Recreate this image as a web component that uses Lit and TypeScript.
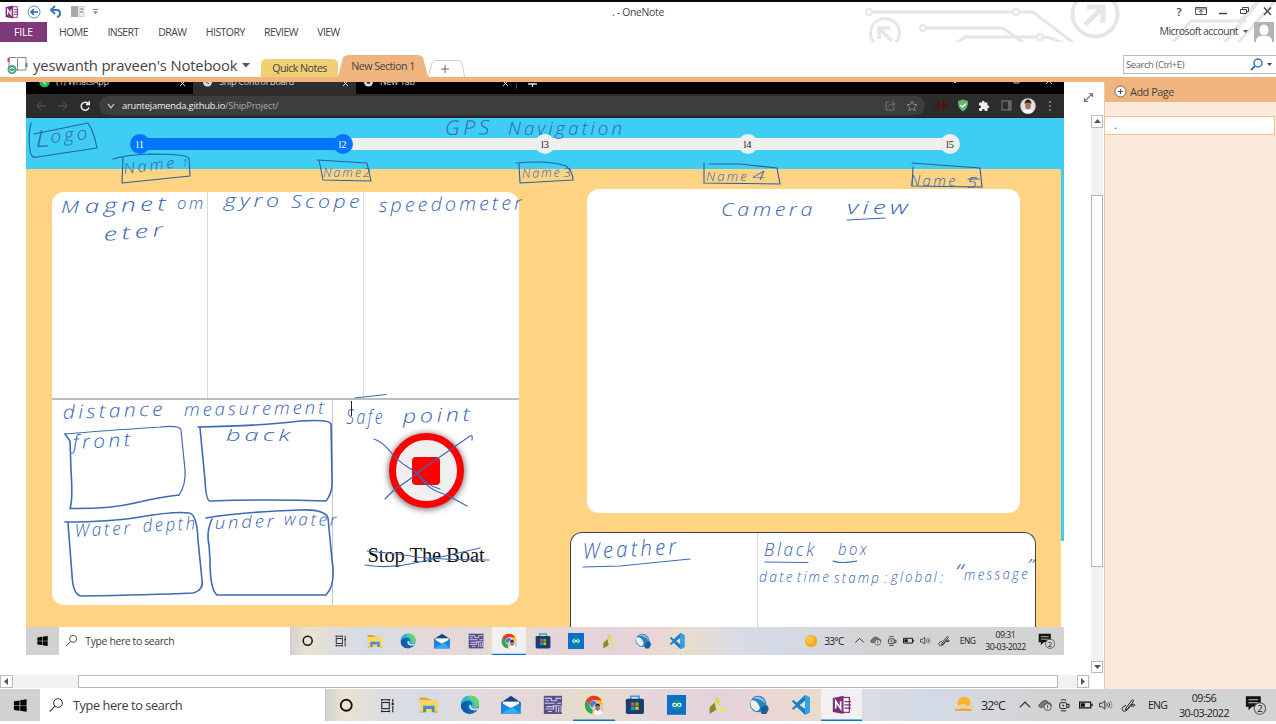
import { LitElement, html, svg, css, SVGTemplateResult } from "lit";
import { customElement, property } from "lit/decorators.js";

const icon = (body: SVGTemplateResult, box = "0 0 24 24") =>
  html`<svg class="ic" viewBox=${box}>${body}</svg>`;

const I: Record<string, SVGTemplateResult> = {
  win: svg`<path fill="#000" d="M3 6l8-1.2v6.8H3zM12 4.6L21 3.3v8.3h-9zM3 12.5h8v6.8L3 18.2zM12 12.5h9v8.3l-9-1.3z"/>`,
  mag: svg`<circle cx="15" cy="9" r="6.5" fill="none" stroke="#333" stroke-width="1.5"/><path d="M10.4 13.8L2.5 21.8" stroke="#333" stroke-width="1.7"/>`,
  ring: svg`<circle cx="12" cy="12" r="8" fill="none" stroke="#111" stroke-width="2.6"/>`,
  task: svg`<g fill="none" stroke="#222" stroke-width="1.6"><rect x="4" y="8" width="11" height="9"/><path d="M3 4h13M4 3v3M15 3v3M3 21h13M4 22v-3M15 22v-3M20 3v5M20 13v9"/></g><rect x="18.4" y="8.5" width="3.2" height="3.4" fill="#222"/>`,
  folder: svg`<path fill="#e0a526" d="M1 3h8l2 2h3v4H1z"/><path fill="#fdd565" d="M1 6h22v15H1z"/><path fill="#3f92d2" d="M5 13h14v8h-3.5v-4h-7v4H5z"/><path fill="#e9ad2d" d="M1 20h4v1.5H1zM19 20h4v1.5h-4z"/>`,
  edge: svg`<circle cx="12" cy="12" r="11" fill="#0c68b8"/><path fill="#2fb7cf" d="M1 12C1 5 6 1 12 1s11 4 11 9c0 4-3 6-6 6-2 0-4-1-3-2 2-3 0-7-4-7-5 0-9 3-9 5z"/><path fill="#60d66c" d="M13 1c6 0 10 4 10 9 0 4-3 6-6 6 2-6-1-11-9-12z"/><path fill="#0b5cab" d="M10 8c-5 3-4 11 3 14-6 2-11-3-12-8 1-4 5-6 9-6z"/><path fill="#e5e0e3" d="M14 14c-1 1 1 2.5 4 2.5 2 0 3-.6 4-1.2L21 18c-4 2-10 0-10-4 0-1 1-2 2-2.400z"/>`,
  mail: svg`<path fill="#0b4a8c" d="M0 9L12 1l12 8v5H0z"/><path fill="#fff" d="M2 8h20v7H2z"/><path fill="#1b86dd" d="M0 9l12 7 12-7v14H0z"/><path fill="#35a9f2" d="M0 23L14 14l10 9z"/>`,
  media: svg`<rect x="1" y="1" width="22" height="22" fill="#5a4f8c"/><path fill="none" stroke="#cfc9e6" stroke-width="1.4" d="M2 4h8v3h6V4h6M2 10h12M17 10h5M4 14h9v3H3M16 13v8M19 15v6M22 13v8M6 20h5M3 7h4M12 13h9"/>`,
  chrome: svg`<circle cx="12" cy="12" r="11" fill="#fbc116"/><path fill="#e33b2e" d="M2.500 6.500A11 11 0 0 1 21.500 6.500H12L7.500 14z"/><path fill="#2da94f" d="M2.500 6.500L8 15l4 2-3 6C2 21-1 13 2.500 6.500z"/><circle cx="12" cy="12" r="5.200" fill="#fff"/><circle cx="11.500" cy="11.500" r="4.200" fill="#3f7fe8"/><circle cx="17" cy="17" r="7" fill="#d5cfcb"/><path fill="#fff" d="M12 22c1-4 3-4 5-4s4 1 5 4c-3 2.500-7 2.500-10 0z"/><ellipse cx="16.500" cy="15.500" rx="2.700" ry="3.600" fill="#a87158"/><path fill="#2a2222" d="M13.500 14c0-5 6-5 6 0-2-1.500-4-1.500-6 0z"/>`,
  store: svg`<path fill="none" stroke="#2ea4e0" stroke-width="2" d="M7 6V1.500h10V6"/><rect x="1" y="4.500" width="22" height="18.500" rx="2" fill="#173f70"/><path fill="#f25022" d="M7.500 9h4v4h-4z"/><path fill="#7fba00" d="M12.500 9h4v4h-4z"/><path fill="#00a4ef" d="M7.500 14h4v4h-4z"/><path fill="#ffb900" d="M12.500 14h4v4h-4z"/>`,
  arduino: svg`<rect width="24" height="24" fill="#0a70cc"/><circle cx="12" cy="12" r="6.500" fill="#0f8f98"/><path fill="none" stroke="#fff" stroke-width="1.300" d="M12 12c-1.500-2.500-5-2.500-5 0s3.500 2.500 5 0 5-2.500 5 0-3.500 2.500-5 0z"/>`,
  leaf: svg`<path fill="#8e8a1e" d="M8 9l2 9-8 5V15z"/><path fill="#d3db5a" d="M8 2l6 2v10L9 9z"/><path fill="#e2e67a" d="M13 13l10 6-7 2-5-4z"/>`,
  globe: svg`<circle cx="11" cy="11" r="10" fill="#2d83bb"/><path fill="#e9f2f8" d="M2 7c5-2 9 2 11 8 0 3-2 5-5 4C3 17 1 12 2 7z"/><path fill="#93c6e4" d="M5 4c7 0 12 3 15 7-1-6-8-12-15-7z"/><path fill="#17629b" d="M14 15l8-3 2 5-3 6h-6z"/>`,
  code: svg`<path fill="#1b7fc8" d="M17 0l6 3v18l-6 3-10-9.500L3 18l-2-1.500L5.500 12 1 7.500 3 6l4 3.500zM17 7l-6.500 5 6.500 5z"/><path fill="#2ea5ea" d="M17 0l6 3v18l-6 3z"/>`,
  note: svg`<rect x="11" y="3" width="10" height="18" fill="#fff" stroke="#7b3179" stroke-width="1.500"/><path d="M15 8h8M15 12h8M15 16h8" stroke="#7b3179" stroke-width="1.600"/><path fill="#7b3179" d="M1 3.500L14 1v22L1 20.500z"/><path fill="none" stroke="#fff" stroke-width="2" d="M4.500 16.500v-9l6 9v-9"/>`,
  sun: svg`<circle cx="12" cy="12" r="9" fill="#f8ab21"/><circle cx="10" cy="10" r="6" fill="#fcc246"/>`,
  haze: svg`<circle cx="11" cy="10" r="8" fill="#f9b52c"/><path d="M4 13c3-3 8-3 10 0h8c2 0 2 3 0 3H2c-2 0-1-3 2-3z" fill="#e6d2a4"/><path d="M1 18h18" stroke="#eba348" stroke-width="2.500" stroke-linecap="round"/>`,
  up: svg`<path fill="none" stroke="#222" stroke-width="1.900" d="M3 16l9-9 9 9"/>`,
  cloud: svg`<path fill="#777" stroke="#333" stroke-width="1.300" d="M6 17c-6-1-5-7-1-8 2-6 11-6 13-1 4 0 6 4 4 7"/><circle cx="16.500" cy="15.500" r="6" fill="#ddd" stroke="#444" stroke-width="1.400"/><path d="M16.500 12v5M16.500 18v1.500" stroke="#333" stroke-width="1.500"/>`,
  cam: svg`<g fill="none" stroke="#222" stroke-width="1.700"><rect x="3" y="8" width="12" height="10" rx="2"/><path d="M15 11h4v5h-4M5 4c3-1.500 6-1.500 9 0M5 22h9"/><circle cx="9" cy="13" r="1"/></g>`,
  batt: svg`<path fill="none" stroke="#111" stroke-width="2" d="M1 7h19v10H1zM22.500 10v4"/><path fill="#111" d="M3 9h7v6H3z"/>`,
  vol: svg`<path fill="none" stroke="#222" stroke-width="1.500" d="M1 9h4l5-4v14l-5-4H1zM13 9c1.500 2 1.500 4 0 6M16 7c3 3 3 7 0 10"/><path fill="none" stroke="#888" stroke-width="1.500" d="M19 5c4 4 4 10 0 14"/>`,
  pen: svg`<path fill="none" stroke="#222" stroke-width="1.600" d="M8 16L17 4c1-2 4-1 3 1l-9 13-4 1zM8 12c-5 1-7 4-6 7s7 3 9-2 5-6 9-7c3 0 3 3 0 3h-4"/>`,
  notif: svg`<path fill="#111" d="M1 2h17v12H8l-4 4v-4H1z"/><path stroke="#ccc" stroke-width="1.200" d="M4 6h11M4 9.500h11"/><circle cx="17" cy="16" r="6.500" fill="#d3d3d3" stroke="#555" stroke-width="1.200"/>`,
};

@customElement("task-bar")
class TaskBar extends LitElement {
  @property() time = "";
  @property() temp = "";
  @property() weather = "sun";
  @property() active = "";
  @property() underline = "";
  @property({ type: Boolean }) note = false;

  static styles = css`
    :host { display: flex; overflow: hidden; color: #222; font-family: "Open Sans", "Noto Sans", sans-serif;
      background: linear-gradient(90deg, #d2d2d2 0 25.5%, #ebe3d0 27%, #dcdde0 30%, #d5dce8 33%, #dfdade 36%, #e8d7d8 39.500%, #e3d9d5 43%, #e8dccb 46%, #e6d7d8 50%, #e4d3dc 56%, #ebd5d6 60%, #e7dcce 64%, #d9dce3 68%, #d3dae6 73%, #d5d7dc 78%, #d3d3d3 81%); }
    .cell { display: flex; align-items: center; justify-content: center; flex: none; box-sizing: border-box; }
    .ic { width: 2em; height: 2em; display: block; }
    .start { width: 4em; background: #d1d1d1; }
    .start .ic { width: 1.850em; height: 1.700em; }
    .search { width: 28.550em; background: #fff; justify-content: flex-start; padding-left: .8em; gap: .9em; border-right: 1px solid #ccc; }
    .search .ic { width: 1.600em; height: 1.600em; }
    .q { font-size: 1.280em; color: #3c3c3c; letter-spacing: -.035em; white-space: nowrap; }
    .app { width: 4.130em; }
    .app .ic { width: 1.980em; height: 1.980em; }
    .thin .ic { width: 1.650em; height: 1.650em; }
    .on { background: #f3f0f2; }
    .line { box-shadow: inset 0 -.15em #0b74cf; }
    .sp { flex: 1; }
    .t { width: 2.030em; } .t .ic { width: 1.400em; height: 1.400em; }
    .sun { width: 2.800em; } .temp { width: 3.600em; justify-content: flex-start; padding-left: .25em; }
    .temp span { font-size: 1.250em; letter-spacing: -.07em; }
    .pen { width: 2.500em; } .pen .ic { width: 1.500em; height: 1.500em; }
    .eng { width: 3.300em; } .eng span { font-size: 1.050em; letter-spacing: -.07em; }
    .clock { width: 6em; flex-direction: column; line-height: 1.500em; gap: 0; }
    .clock span { font-size: 1.080em; letter-spacing: -.06em; white-space: nowrap; }
    .notif { width: 4.200em; }
    .notif .ic { width: 2.100em; height: 2.200em; }
  `;
  render() {
    const apps = ["ring", "task", "folder", "edge", "mail", "media", "chrome", "store", "arduino", "leaf", "globe", "code"];
    if (this.note) apps.push("note");
    return html`
      <div class="cell start">${icon(I.win)}</div>
      <div class="cell search">${icon(I.mag)}<span class="q">Type here to search</span></div>
      ${apps.map((a) => html`<div class="cell app ${a === "ring" || a === "task" ? "thin" : ""} ${this.active === a ? "on line" : ""} ${this.underline === a ? "line" : ""}">${icon(I[a])}</div>`)}
      <div class="sp"></div>
      <div class="cell sun">${icon(I[this.weather])}</div>
      <div class="cell temp"><span>${this.temp}</span></div>
      ${["up", "cloud", "cam", "batt", "vol"].map((a) => html`<div class="cell t">${icon(I[a])}</div>`)}
      <div class="cell pen">${icon(I.pen)}</div>
      <div class="cell eng"><span>ENG</span></div>
      <div class="cell clock"><span>${this.time}</span><span>30-03-2022</span></div>
      <div class="cell notif"><svg class="ic" viewBox="0 0 24 24">${I.notif}<text x="17" y="20" font-size="11" text-anchor="middle" fill="#111">2</text></svg></div>
    `;
  }
}

/* Pen notes: [text, x, baseline, width, size, rotation] */
type Note = [string, number, number, number, number, number?];
const NOTES: Note[] = [
  ["L", 36, 147, 14, 23, -3], ["ogo", 51, 143, 38, 18, -6],
  ["Name", 124, 174, 52, 15, -7], ["1", 182, 167, 6, 11],
  ["Name", 323, 177, 38, 13], ["2", 363, 177, 7, 13], ["Name", 522, 178, 38, 13, -2], ["3", 563, 177, 8, 13],
  ["Name", 706, 181, 41, 13], ["4", 752, 180, 13, 13],
  ["Name", 910, 186, 46, 15], ["5", 967, 188, 10, 14],
  ["GPS", 445, 135, 46, 20, -1], ["Navigation", 508, 135, 115, 19],
  ["M", 61, 213, 18, 17], ["agnet", 85, 213, 83, 19, -2], ["om", 177, 209, 27, 17], ["eter", 104, 241, 62, 18, -5],
  ["gyro", 224, 207, 57, 19], ["Scope", 291, 208, 70, 19], ["speedometer", 379, 212, 144, 19, -1],
  ["Camera", 721, 216, 93, 18], ["view", 847, 214, 63, 18],
  ["distance", 63, 419, 101, 19, -2], ["measurement", 184, 416, 141, 18, -1],
  ["front", 73, 449, 59, 19, -3], ["back", 226, 441, 66, 17],
  ["Water", 75, 537, 56, 18, -3], ["depth", 143, 532, 53, 18, -3],
  ["under", 215, 529, 60, 17, -2], ["water", 284, 525, 53, 17, 1],
  ["Safe", 346, 424, 37, 20, 0], ["point", 403, 423, 69, 19, -2],
  ["Weather", 583, 559, 95, 22, -3],
  ["Black", 764, 556, 51, 18], ["box", 838, 555, 29, 17],
  ["date", 759, 582, 34, 14], ["time", 797, 582, 32, 14], ["stamp", 834, 583, 45, 15],
  [":", 884, 583, 3, 14], ["global", 891, 582, 46, 15], [":", 940, 583, 3, 14],
  ["“", 955, 579, 8, 20], ["message", 964, 580, 64, 15, -1], ["”", 1027, 571, 7, 16],
];

@customElement("ink-layer")
class InkLayer extends LitElement {
  static styles = css`
    :host { display: block; }
    svg { display: block; width: 100%; height: 100%; }
    .pen { fill: none; stroke: #3d6ab5; stroke-width: 1.200; stroke-linecap: round; stroke-linejoin: round; }
    .bold { stroke-width: 1.600; }
    .dark { stroke: #27619d; stroke-width: 1.100; }
    text { font-family: "Open Sans", "Noto Sans", sans-serif; font-weight: 300; font-style: italic; letter-spacing: .16em; fill: #3563b4; }
    .one { letter-spacing: 0; }
  `;
  render() {
    return html`<svg viewBox="0 82 1090 607">
      <g class="pen dark">
        <path d="M31 123Q28 135 30 150Q31 159 37 157L97 148Q94 132 88 123L34 134"/>
        <path d="M113 159Q125 155 150 154Q186 154 189 158L190 176L122 183L123 157"/>
        <path d="M317 160L367 163L371 181L323 180L319 160"/>
        <path d="M516 163Q550 160 566 166Q573 172 573 180L520 183L519 164"/>
        <path d="M704 163V183L780 184L777 168L740 164H709"/>
        <path d="M912 163L980 168L982 187L912 186L913 167M979 179H968"/>
      </g>
      <g class="pen">
        <path d="M847 220L885 218M355 398L386 394.500"/>
        <path d="M583 567L620 566L690 559M765 562L808 562.500M833 561Q840 564 857 561"/>
        <path d="M374 439Q382 442 389 450C400 465 411 468 418 474Q427 486 440 489M418 474Q427 490 447 495L467 506"/>
        <path d="M385 499L395 489Q410 480 421 470L470 436Q473 434 472 440"/>
        <path d="M367 551Q400 554 420 557.500Q450 560 489 560M365 565Q390 569 415 563L480 548"/>
      </g>
      <g class="pen bold">
        <path d="M65 434L70 441L71 470Q73 500 70 508.500Q110 509 135 503Q160 497 179 495"/>
        <path d="M198 427Q260 426 300 421Q330 419 331 424L332 480Q333 492 326 501Q270 499 210 501Q206 501 205 480L200 428"/>
        <path d="M65 522Q110 522 140 517Q175 511 189 513Q197 514 198 540L202 580Q204 590 193 593Q150 595 82 596Q73 596 72 575L68 523"/>
        <path d="M206 518Q240 512 300 510Q325 509 328 518L332 560Q336 585 326 595L217 595Q210 590 210 560L209 545Q206 532 212 519"/>
      </g>
      <path class="pen" d="M65 434Q100 431 160 427Q180 425 181 430L185 470Q186 485 179 495"/>
      ${NOTES.map(([t, x, y, w, s, r = 0]) => svg`<text class=${t.length < 2 ? "one" : ""} x=${x} y=${y} font-size=${s} textLength=${w + (t.length > 1 ? 2 : 0)} lengthAdjust="spacingAndGlyphs" transform="rotate(${r} ${x} ${y})">${t}</text>`)}
      <path d="M351.500 401v15" stroke="#222" stroke-width="1"/>
    </svg>`;
  }
}

@customElement("ship-board")
class ShipBoard extends LitElement {
  static styles = css`
    :host { display: flex; flex-direction: column; background: #ffd384; font-family: "Open Sans", "Noto Sans", sans-serif; }
    svg { display: block; flex: none; }
    .tabs { height: 12px; background: #000; display: flex; overflow: hidden; color: #d5d5d5; font-size: 9px; line-height: 0; }
    .tab { display: flex; box-sizing: border-box; padding: 0 7px 0 13px; gap: 6px; align-items: flex-start; height: 12px; }
    .tab span { flex: 1; white-space: nowrap; letter-spacing: -.250px; }
    .a { width: 167px; } .b { width: 163px; padding-left: 9px; background: #2e2e2e; } .c { width: 160px; padding-left: 7px; }
    .plus { border-left: 1px solid #444; height: 6px; padding-left: 11px; margin-top: 1px; flex: 1; }
    .url { height: 24px; background: #2c2c2c; display: flex; align-items: center; color: #aaa; font-size: 9.300px; box-sizing: border-box; border-bottom: 1px solid #222; }
    .nav { width: 73px; display: flex; gap: 10px; padding-left: 9px; box-sizing: border-box; }
    .pill { background: #3d3d3d; height: 19px; border-radius: 10px; width: 826px; flex: none; display: flex; align-items: center; padding: 0 7px; box-sizing: border-box; gap: 10px; }
    .pill b { font-weight: 400; color: #f0f0f0; }
    .pill .addr { flex: 1; letter-spacing: -.190px; margin-left: -4px; }
    .ext { display: flex; align-items: center; gap: 7.600px; padding-left: 9px; }
    .head { height: 51px; background: #3fcdf3; box-sizing: border-box; padding: 16px 104px 0 104px; }
    .steps { display: flex; justify-content: space-between; height: 20px;
      background: linear-gradient(90deg, #0275ff 0 25%, #efeff0 25%) center / calc(100% - 10px) 12px no-repeat; }
    .step { width: 20px; height: 20px; border-radius: 50%; background: #efeff0; color: #222; display: grid; place-items: center; font: 10.500px "Liberation Serif", serif; }
    .step.done { background: #0275ff; color: #fff; }
    .body { flex: 1; display: grid; grid-template-columns: 467px 1fr 3px; padding-left: 26px; min-height: 0; }
    .left { margin-top: 23px; height: 413px; background: #fff; border-radius: 12px; display: grid; grid-template-rows: 208px 1fr; overflow: hidden; }
    .row3 { display: grid; grid-template-columns: 155px 156px 1fr; border-bottom: 2px solid #bdbdbd; }
    .row3 div + div { border-left: 1px solid #d9dade; }
    .row2 { display: grid; grid-template-columns: 280px 1fr; }
    .stop { border-left: 1px solid #c5c6ca; display: flex; flex-direction: column; align-items: center; padding-top: 33px; }
    .btn { width: 61px; height: 61px; border: 7px solid #f00; border-radius: 50%; background: #efefef; display: grid; place-items: center; box-shadow: 0 1px 6px 1px #777; }
    .btn i { width: 28px; height: 28px; border-radius: 4px; background: #f00; }
    .lbl { font: 20.500px "Liberation Serif", serif; color: #111; margin-top: 36px; letter-spacing: -.080px; }
    .right { display: flex; flex-direction: column; padding: 20px 0 0 51px; }
    .camera { width: 433px; height: 324px; margin-left: 16.500px; background: #fff; border-radius: 12px; }
    .info { width: 466px; flex: 1; margin-top: 19px; box-sizing: border-box; background: #fff; border: 1px solid #444; border-bottom: 0; border-radius: 12px 12px 0 0; display: grid; grid-template-columns: 186px 1fr; }
    .info div + div { border-left: 1px solid #ddd; }
    .strip { background: linear-gradient(#3fcdf3 372px, #fff 372px); }
    task-bar { height: 28px; font-size: 8.135px; }
  `;
  render() {
    const x = html`<svg width="7" height="5" viewBox="0 0 7 5"><path d="M1 -1L6 4M6 -1L1 4" stroke="#ddd"/></svg>`;
    return html`
      <div class="tabs">
        <div class="tab a"><svg width="11" height="6" viewBox="0 0 11 6"><circle cx="5.500" cy="0" r="5.200" fill="#1fc15a"/><path d="M4 0l3 2" stroke="#fff"/></svg><span>(1) WhatsApp</span>${x}</div>
        <div class="tab b"><svg width="11" height="6" viewBox="0 0 11 6"><circle cx="5.500" cy="0" r="4.500" fill="#ddd"/><path d="M4 0l3 2" stroke="#444"/></svg><span>Ship Control Board</span>${x}</div>
        <div class="tab c"><svg width="11" height="6" viewBox="0 0 11 6"><circle cx="5.500" cy="0" r="4.500" fill="#ddd"/><circle cx="5.500" cy="0" r="2" fill="#333"/></svg><span>New Tab</span>${x}</div>
        <div class="plus"><svg width="9" height="5" viewBox="0 0 9 5"><path d="M0 1h9M4.500 0v4" stroke="#ddd" stroke-width="1.300"/></svg></div>
        <svg width="110" height="5" viewBox="0 0 110 5"><path d="M0 0l1 1 1-1M60 0v1h5v-1M92 2l3-3 3 3" stroke="#ccc" fill="none"/></svg>
      </div>
      <div class="url">
        <div class="nav">
          <svg width="12" height="12" viewBox="0 0 12 12"><path d="M11 6H2M6 2L2 6l4 4" stroke="#555" fill="none"/></svg>
          <svg width="12" height="12" viewBox="0 0 12 12"><path d="M1 6h9M6 2l4 4-4 4" stroke="#555" fill="none"/></svg>
          <svg width="12" height="12" viewBox="0 0 12 12"><path d="M9.500 4A4 4 0 1 0 10 7.500M10.300 1v3.500H7" stroke="#eee" stroke-width="1.500" fill="none"/></svg>
        </div>
        <div class="pill">
          <svg width="10" height="10" viewBox="0 0 10 10"><path d="M2 3l3 4 3-4" stroke="#bbb" stroke-width="1.300" fill="none"/></svg>
          <span class="addr"><b>aruntejamenda.github.io</b>/ShipProject/</span>
          <svg width="11" height="11" viewBox="0 0 11 11"><path d="M4 2H1v8h8V7M3 7c1-3 3-3 6-3M7 1l3 3-3 3" stroke="#777" fill="none"/></svg>
          <svg width="12" height="12" viewBox="0 0 12 12"><path d="M6 1l1.500 3.300 3.500.4-2.600 2.400.7 3.500L6 8.900l-3.100 1.700.7-3.500L1 4.700l3.500-.4z" stroke="#888" fill="none"/></svg>
        </div>
        <div class="ext">
          <svg width="14" height="14" viewBox="0 0 14 14"><path d="M2 4v5M4.500 2v9M7 5v4M9.500 2v10M12 4v6" stroke="#4e0d0d" stroke-width="1.500"/></svg>
          <svg width="14" height="13" viewBox="0 0 14 13"><path d="M2 2l5-1.500L12 2c0 5-1 8-5 10.500C3 10 2 7 2 2z" fill="#62b56b"/><path d="M4.500 6l2 2 3.500-3.500" stroke="#fff" fill="none" stroke-width="1.300"/></svg>
          <svg width="14" height="12" viewBox="0 0 24 24"><path d="M20 11h-1V7a2 2 0 0 0-2-2h-4V4a2.500 2.500 0 0 0-5 0v1H4a2 2 0 0 0-2 2v4h1.500a2.700 2.700 0 0 1 0 5.400H2V20a2 2 0 0 0 2 2h4v-1.500a2.700 2.700 0 0 1 5.400 0V22H17a2 2 0 0 0 2-2v-4h1a2.500 2.500 0 0 0 0-5z" fill="#f0f0f0"/></svg>
          <svg width="14" height="11" viewBox="0 0 14 11"><path d="M3 1h9v9H3z" fill="none" stroke="#666" stroke-width="1.400"/><path d="M9 1h3v9H9z" fill="#666"/></svg>
          <svg width="16" height="16" viewBox="0 0 16 16"><circle cx="8" cy="8" r="7.700" fill="#e4e0df"/><path d="M3 14c1-3 3-3 5-3s4 1 5 3c-3 2-7 2-10 0z" fill="#fff"/><ellipse cx="8" cy="7.500" rx="2.800" ry="4" fill="#a9705a"/><path d="M4.500 6c0-6 7-6 7 0-2-2-5-2-7 0z" fill="#222"/></svg>
          <svg width="12" height="12" viewBox="0 0 12 12"><path d="M6 1v2M6 5v2M6 9v2" stroke="#888" stroke-width="1.600"/></svg>
        </div>
      </div>
      <div class="head"><div class="steps">${[1, 2, 3, 4, 5].map((n) => html`<div class="step ${n < 3 ? "done" : ""}">l${n}</div>`)}</div></div>
      <div class="body">
        <div class="left">
          <div class="row3"><div></div><div></div><div></div></div>
          <div class="row2"><div></div><div class="stop"><div class="btn"><i></i></div><div class="lbl">Stop The Boat</div></div></div>
        </div>
        <div class="right"><div class="camera"></div><div class="info"><div></div><div></div></div></div>
        <div class="strip"></div>
      </div>
      <task-bar time="09:31" temp="33°C" weather="sun" active="chrome"></task-bar>
    `;
  }
}

@customElement("app-root")
class AppRoot extends LitElement {
  static styles = css`
    :host { display: flex; flex-direction: column; width: 1276px; height: 724px; overflow: hidden; background: #fff; color: #444; font-family: "Open Sans", "Noto Sans", sans-serif; }
    svg { display: block; flex: none; }
    .top { height: 40px; border-top: 2px solid #0a0a0a; display: grid; grid-template-rows: 19.500px 20.500px;
      position: relative; }
    .deco { position: absolute; right: 0; top: 0; }
    .title { display: grid; grid-template-columns: 1fr auto 1fr; align-items: center; font-size: 10.400px; letter-spacing: -.320px; position: relative; }
    .quick { display: flex; gap: 8px; padding-left: 5px; align-items: center; }
    .ctl { display: flex; justify-content: flex-end; gap: 8px; padding-right: 2px; align-items: center; }
    .help { width: 14px; text-align: center; font-size: 11.500px; font-weight: 600; line-height: 16px; letter-spacing: 0; }
    .menu { display: flex; align-items: center; font-size: 10.500px; letter-spacing: -.550px; position: relative; }
    .file { width: 47px; height: 100%; background: #80397b; color: #fff; display: grid; place-items: center; margin-right: 12px; letter-spacing: -.200px; }
    .m { margin-right: 19.400px; }
    .acct { margin-left: auto; display: flex; align-items: center; gap: 5px; font-size: 10.600px; letter-spacing: -.600px; }
    .acct span { margin-top: -2px; }
    .book { height: 35px; display: flex; align-items: flex-end; }
    .bk { display: flex; align-items: center; height: 24px; padding-left: 7px; gap: 5px; width: 254px; box-sizing: border-box; font-size: 14.800px; letter-spacing: -.150px; white-space: nowrap; }
    .tabs { display: flex; align-items: flex-end; font-size: 10.700px; letter-spacing: -.530px; flex: 1; padding-left: 7px; }
    .qn { width: 77px; height: 18px; background: #f1d073; border-radius: 5px 5px 0 0; display: grid; place-items: center; }
    .ns { width: 90px; height: 22px; background: #f0b57e; clip-path: polygon(0 100%, 5px 10%, 9px 0, 81px 0, 85px 10%, 100% 100%); display: grid; place-items: center; }
    .newtab { margin-left: -1.500px; }
    .find { width: 154px; height: 19px; box-sizing: border-box; border: 1px solid #bbb; margin-bottom: 3.500px; display: flex; align-items: center; justify-content: space-between; padding: 0 2px; font-size: 9.500px; letter-spacing: -.430px; color: #666; margin-right: -1px; }
    .bar { height: 5px; background: #f0b57e; flex: none; }
    .main { height: 607px; display: grid; grid-template-columns: 1090px 14px 172px; flex: none; }
    .work { position: relative; display: flex; flex-direction: column; }
    ship-board { width: 1038px; height: 573px; margin-left: 26px; }
    ink-layer { position: absolute; inset: 0; }
    .hs { margin-top: 20px; height: 13px; display: flex; background: #f1f1f1; }
    .sb { width: 12.500px; height: 12.500px; box-sizing: border-box; border: 1px solid #bbb; background: #fff; display: grid; place-items: center; flex: none; }
    .ht { width: 980px; margin: 0 19px 0 65px; box-sizing: border-box; border: 1px solid #b5b5b5; background: #fff; }
    .vs { display: flex; flex-direction: column; align-items: center; }
    .vs .exp { margin: 10px 0 12px -17px; }
    .vt { width: 12.500px; height: 372px; box-sizing: border-box; border: 1px solid #b5b5b5; background: #fff; }
    .track { flex: none; width: 12.500px; background: #f1f1f1; }
    .t1 { height: 67px; } .t2 { height: 94px; }
    .pane { background: #fbe9dc; border-left: 1px solid #f0c8a0; }
    .add { height: 20px; background: #f0b57e; display: flex; align-items: center; gap: 3px; padding: 0 0 2px 9px; box-sizing: border-box; font-size: 10.800px; letter-spacing: -.420px; }
    .page { margin: 14px 1px 0 -1px; height: 17px; background: #fff; border: 1px solid #f0c094; font-size: 11px; line-height: 15px; padding-left: 9px; }
    task-bar { height: 32px; font-size: 10px; flex: none; }
  `;
  render() {
    const down = html`<svg width="8" height="5" viewBox="0 0 8 5"><path d="M0 0h8L4 4.500z" fill="#555"/></svg>`;
    const drop = html`<svg width="5" height="4" viewBox="0 0 5 4"><path d="M0 0h5L2.500 3z" fill="#555"/></svg>`;
    return html`
      <div class="top">
        <svg class="deco" width="416" height="40" viewBox="860 2 416 40"><g fill="none" stroke="#e6e6e6" stroke-width="3">
          <circle cx="869" cy="12" r="3" stroke-width="2"/><path d="M873 12h139M1020 12h13L1075 44"/><circle cx="1016" cy="12" r="3" stroke-width="2"/>
          <circle cx="923" cy="28" r="3" stroke-width="2"/><path d="M927 28h76L1025 44M955 44l10-7h71M1044 37q8 0 22 8"/><circle cx="1040" cy="37" r="3" stroke-width="2"/>
          <circle cx="885" cy="33" r="14.500"/><path d="M892 41L880 29M879 39V28h11" stroke-width="3.500"/>
          <circle cx="1095" cy="14" r="22.500" stroke-width="4"/><path d="M1085 25L1101 9M1087 7h16v16" stroke-width="5"/>
          <path d="M1172 44L1191 21H1246M1223 44L1260 0M1237 44L1276 0M1240 21l18-20"/></g></svg>
        <div class="title">
          <div class="quick">
            <svg width="14" height="14" viewBox="0 0 24 24">${I.note}</svg>
            <svg width="14" height="14" viewBox="0 0 14 14"><circle cx="7" cy="7" r="6" fill="#fff" stroke="#5b8cc0"/><path d="M11 7H4M7 4L4 7l3 3" fill="none" stroke="#2a66a8" stroke-width="1.500"/></svg>
            <svg width="14" height="14" viewBox="0 0 14 14"><path d="M2 5h6c4 0 4 6 0 7M6 1L2 5l4 4" fill="none" stroke="#3c74b5" stroke-width="2"/></svg>
            <svg width="14" height="13" viewBox="0 0 14 13"><path d="M0 1h7v11H0z" fill="#aaa"/><path d="M8 1.500h5v10H8z" fill="#eee" stroke="#ccc"/><path d="M9 4h3M9 7h3" stroke="#777"/></svg>
            <svg width="5" height="6" viewBox="0 0 5 6"><path d="M0 .500h5" stroke="#777"/><path d="M0 2.500h5L2.500 5z" fill="#777"/></svg>
          </div>
          <div>. - OneNote</div>
          <div class="ctl">
            <span class="help">?</span>
            <svg width="14" height="14" viewBox="0 0 14 14"><path d="M1.500 2.500h11v7h-11zM1.500 4h11M7 9V5M5 7l2-2 2 2" fill="none" stroke="#555"/></svg>
            <svg width="14" height="14" viewBox="0 0 14 14"><path d="M3 8.500h8" stroke="#444" stroke-width="1.500"/></svg>
            <svg width="14" height="14" viewBox="0 0 14 14"><path d="M2.500 4.500h6v4h-6zM4.500 4.500v-2h6v4h-2" fill="none" stroke="#444"/></svg>
            <svg width="14" height="14" viewBox="0 0 14 14"><path d="M4 2.500l7 7.500M11 2.500L4 10" stroke="#444" stroke-width="1.300"/></svg>
          </div>
        </div>
        <div class="menu"><span class="file">FILE</span>
          ${["HOME", "INSERT", "DRAW", "HISTORY", "REVIEW", "VIEW"].map((m) => html`<span class="m">${m}</span>`)}
          <div class="acct"><span>Microsoft account</span>${drop}<svg width="23" height="20" viewBox="0 0 23 20"><rect x="1" width="20" height="20" fill="#b4b4b4"/><ellipse cx="11" cy="8" rx="4.500" ry="5.500" fill="#fff"/><path d="M3 20c0-6 4-6 8-6s8 0 8 6z" fill="#fff"/></svg></div>
        </div>
      </div>
      <div class="book">
        <div class="bk">
          <svg width="21" height="20" viewBox="0 0 21 20"><path d="M2 2.500h7.500q1 0 1 1 0-1 1-1H19V15h-7.500q-1 0-1 1 0-1-1-1H2zM10.500 4v12" fill="#fff" stroke="#888"/><path d="M1.500 3v4" stroke="#c44" stroke-width="2"/><path d="M19.500 8v4" stroke="#48b" stroke-width="2"/><circle cx="5" cy="14.500" r="4.500" fill="#4aa58c"/><path d="M2.500 14q2.500-3 5 0M7.500 15.500q-2.500 3-5 0" stroke="#fff" fill="none"/></svg>
          <span>yeswanth praveen's Notebook</span>${down}
        </div>
        <div class="tabs"><span class="qn">Quick Notes</span><span class="ns">New Section 1</span>
          <svg class="newtab" width="38" height="17" viewBox="0 0 38 17"><path d="M1 17L5 3Q6 .500 9 .500H31Q34 .500 35 3L37.500 17" fill="#fff" stroke="#ccc"/><path d="M14 9h8M18 5v8" stroke="#666"/></svg></div>
        <div class="find"><span>Search (Ctrl+E)</span><svg width="24" height="15" viewBox="0 0 24 15"><circle cx="8" cy="6" r="4" fill="none" stroke="#3a72b8" stroke-width="1.500"/><path d="M5 9l-4 4" stroke="#3a72b8" stroke-width="2"/><path d="M17 6h5l-2.500 3z" fill="#444"/></svg></div>
      </div>
      <div class="bar"></div>
      <div class="main">
        <div class="work">
          <ship-board></ship-board>
          <div class="hs"><div class="sb"><svg width="5" height="7" viewBox="0 0 5 7"><path d="M4 0v7L0 3.500z" fill="#555"/></svg></div><div class="ht"></div><div class="sb"><svg width="5" height="7" viewBox="0 0 5 7"><path d="M1 0v7l4-3.500z" fill="#555"/></svg></div></div>
          <ink-layer></ink-layer>
        </div>
        <div class="vs">
          <svg class="exp" width="11" height="11" viewBox="0 0 11 11"><path d="M2 9L9 2M6 1.500h3.500V5M1.500 6v3.500H5" fill="none" stroke="#777" stroke-width="1.200"/></svg>
          <div class="sb"><svg width="7" height="4" viewBox="0 0 7 4"><path d="M0 4h7L3.500 0z" fill="#555"/></svg></div>
          <div class="track t1"></div><div class="vt"></div><div class="track t2"></div>
          <div class="sb"><svg width="7" height="4" viewBox="0 0 7 4"><path d="M0 0h7L3.500 4z" fill="#555"/></svg></div>
        </div>
        <div class="pane">
          <div class="add"><svg width="13" height="13" viewBox="0 0 13 13"><circle cx="6.500" cy="6.500" r="5.500" fill="#fff" stroke="#666"/><path d="M4 6.500h5M6.500 4v5" stroke="#555"/></svg>Add Page</div>
          <div class="page">.</div>
        </div>
      </div>
      <task-bar time="09:56" temp="32°C" weather="haze" active="note" underline="chrome" note></task-bar>
    `;
  }
}
